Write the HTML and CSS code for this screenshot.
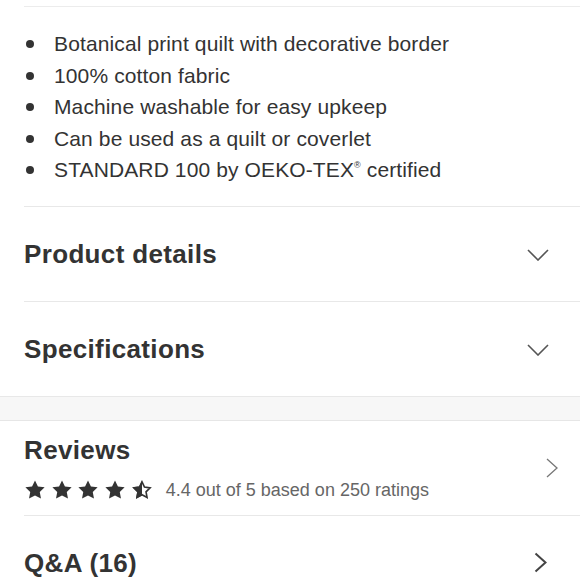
FILE: index.html
```html
<!DOCTYPE html>
<html>
<head>
<meta charset="utf-8">
<link rel="stylesheet" href="styles.css">
</head>
<body>
<div class="page">
  <div class="rule"></div>
  <ul class="bullets">
    <li>Botanical print quilt with decorative border</li>
    <li>100% cotton fabric</li>
    <li>Machine washable for easy upkeep</li>
    <li>Can be used as a quilt or coverlet</li>
    <li>STANDARD 100 by OEKO-TEX<sup>®</sup> certified</li>
  </ul>
  <div class="acc">
    <div class="acc-row">
      <h2>Product details</h2>
      <svg class="chev-down" viewBox="0 0 22 12" width="22" height="12"><path d="M1 1l10 10L21 1" /></svg>
    </div>
    <div class="acc-row last">
      <h2>Specifications</h2>
      <svg class="chev-down" viewBox="0 0 22 12" width="22" height="12"><path d="M1 1l10 10L21 1" /></svg>
    </div>
  </div>
  <div class="band"></div>
  <div class="link-row reviews">
    <div class="link-main">
      <h2>Reviews</h2>
      <div class="rating">
        <span class="stars">
          <svg viewBox="0 0 24 24" width="22" height="22"><path class="full" d="M12 1.5l3.2 6.6 7.3 1-5.3 5.1 1.3 7.2L12 18l-6.5 3.4 1.3-7.2L1.5 9.1l7.3-1z"/></svg>
          <svg viewBox="0 0 24 24" width="22" height="22"><path class="full" d="M12 1.5l3.2 6.6 7.3 1-5.3 5.1 1.3 7.2L12 18l-6.5 3.4 1.3-7.2L1.5 9.1l7.3-1z"/></svg>
          <svg viewBox="0 0 24 24" width="22" height="22"><path class="full" d="M12 1.5l3.2 6.6 7.3 1-5.3 5.1 1.3 7.2L12 18l-6.5 3.4 1.3-7.2L1.5 9.1l7.3-1z"/></svg>
          <svg viewBox="0 0 24 24" width="22" height="22"><path class="full" d="M12 1.5l3.2 6.6 7.3 1-5.3 5.1 1.3 7.2L12 18l-6.5 3.4 1.3-7.2L1.5 9.1l7.3-1z"/></svg>
          <svg viewBox="0 0 24 24" width="22" height="22">
            <defs><clipPath id="lh"><rect x="0" y="0" width="12" height="24"/></clipPath></defs>
            <path class="outline" d="M12 3.2l2.7 5.6 6.1 0.9-4.4 4.3 1.1 6.1L12 17.2l-5.5 2.9 1.1-6.1-4.4-4.3 6.1-0.9z"/>
            <path class="full" clip-path="url(#lh)" d="M12 1.5l3.2 6.6 7.3 1-5.3 5.1 1.3 7.2L12 18l-6.5 3.4 1.3-7.2L1.5 9.1l7.3-1z"/>
          </svg>
        </span>
        <span class="rating-text">4.4 out of 5 based on 250 ratings</span>
      </div>
    </div>
    <svg class="chev-right light" viewBox="0 0 12 20" width="12" height="20"><path d="M1 1l10 9-10 9" /></svg>
  </div>
  <div class="link-row qa">
    <h2>Q&amp;A (16)</h2>
    <svg class="chev-right dark" viewBox="0 0 13 21" width="13" height="21"><path d="M1.5 1.5l10 9-10 9" /></svg>
  </div>
</div>
</body>
</html>
```

FILE: styles.css
```css
html, body {
  margin: 0;
  padding: 0;
  background: #fff;
}
body {
  font-family: "Liberation Sans", Arial, sans-serif;
  color: #333;
  overflow: hidden;
}
.page {
  width: 580px;
}
.rule {
  margin-top: 6px;
  margin-left: 24px;
  height: 1px;
  background: #ececec;
}
.bullets {
  margin: 0;
  padding: 21px 0 20px 30px;
  list-style: none;
  border-bottom: 1px solid #e8e8e8;
  margin-left: 24px;
}
.bullets li {
  position: relative;
  font-size: 21px;
  line-height: 31.6px;
  height: 31.6px;
  letter-spacing: 0.12px;
  color: #333;
}
.bullets li::before {
  content: "";
  position: absolute;
  left: -28px;
  top: 12px;
  width: 8px;
  height: 8px;
  border-radius: 50%;
  background: #333;
}
.bullets sup {
  font-size: 9px;
  line-height: 0;
  vertical-align: 0;
  position: relative;
  top: -9px;
}
.acc {
  margin-left: 24px;
}
.acc-row {
  height: 94px;
  display: flex;
  align-items: center;
  justify-content: space-between;
  border-bottom: 1px solid #e8e8e8;
  padding-right: 31px;
}
.acc-row.last {
  border-bottom: none;
}
h2 {
  margin: 0;
  font-size: 26px;
  font-weight: bold;
  color: #333;
  line-height: 30px;
  letter-spacing: 0.35px;
}
.chev-down {
  fill: none;
  stroke: #555;
  stroke-width: 1.6;
  margin-top: 2px;
}
.band {
  height: 23px;
  background: #f7f7f7;
  border-top: 1px solid #e8e8e8;
  border-bottom: 1px solid #e6e6e6;
}
.link-row {
  display: flex;
  align-items: center;
  justify-content: space-between;
  margin-left: 24px;
}
.reviews {
  height: 94px;
  border-bottom: 1px solid #e8e8e8;
  padding-right: 22px;
}
.link-main {
  display: flex;
  flex-direction: column;
  padding-top: 1px;
}
.rating {
  display: flex;
  align-items: center;
  margin-top: 14px;
}
.stars {
  display: flex;
  gap: 4.7px;
  margin-left: 0;
}
.stars svg {
  display: block;
}
.stars .full {
  fill: #333;
}
.stars .outline {
  fill: none;
  stroke: #333;
  stroke-width: 1.8;
  stroke-linejoin: miter;
}
.rating-text {
  margin-left: 13px;
  font-size: 18px;
  color: #666;
}
.chev-right {
  fill: none;
}
.chev-right.light {
  stroke: #777;
  stroke-width: 1.3;
}
.qa {
  height: 94px;
  padding-right: 33px;
}
.chev-right.dark {
  stroke: #444;
  stroke-width: 2;
}
```
